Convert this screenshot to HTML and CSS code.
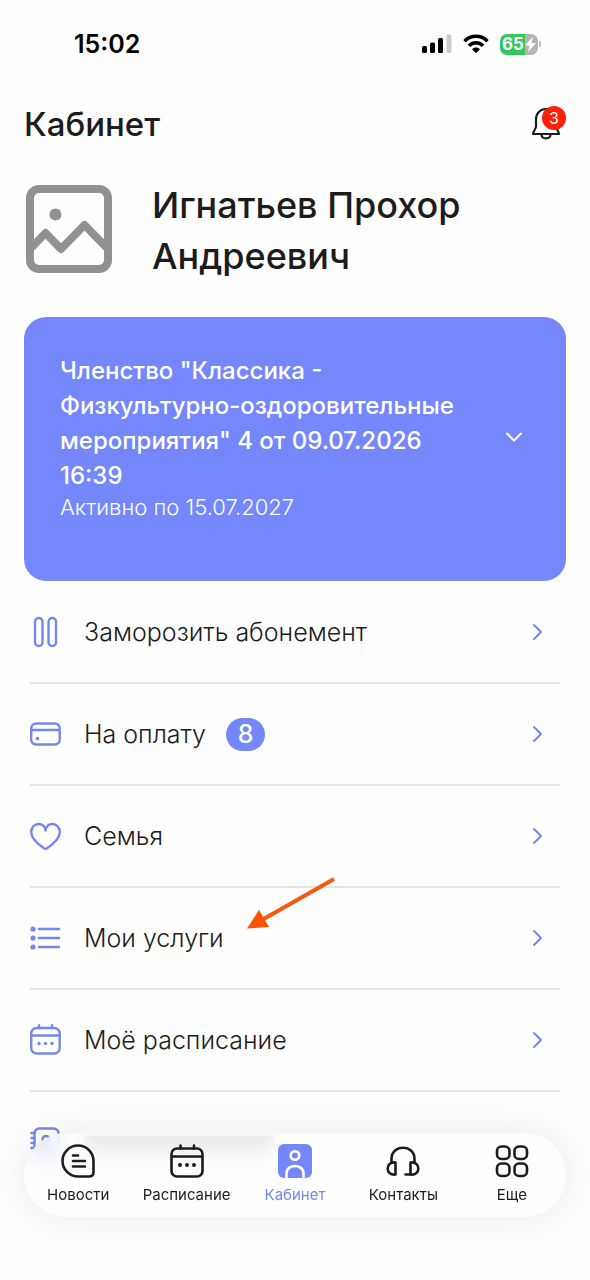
FILE: index.html
```html
<!DOCTYPE html>
<html lang="ru">
<head>
<meta charset="utf-8">
<meta name="viewport" content="width=device-width, initial-scale=1">
<title>Кабинет</title>
<link rel="stylesheet" href="styles.css">
</head>
<body>
<div class="status">
  <time class="clock">15:02</time>
  <div class="status-icons">
    <svg width="30" height="20" viewBox="0 0 30 20"><rect x="0" y="12" width="5" height="7" rx="1.5"/><rect x="8" y="8.500" width="5" height="10.500" rx="1.500"/><rect x="16" y="4" width="5" height="15" rx="1.500"/><rect x="24.500" y="0.500" width="5" height="18.500" rx="1.500" fill="#ccc"/></svg>
    <svg width="26" height="20" viewBox="0 0 26 20" fill="none" stroke="#000" stroke-width="3.400"><path d="M1.500 7.200C8 .6 18 .6 24.500 7.200"/><path d="M6 11.700c4-4 10-4 14 0"/><path d="M13 19.200l-4-4c2.400-2.200 5.600-2.200 8 0z" fill="#000" stroke="none"/></svg>
    <span class="battery">65<svg width="11" height="15" viewBox="0 0 11 15"><path d="M8 0L0 8.500h4.500L3 15l8-9H6.500z" fill="#fff"/></svg></span>
  </div>
</div>
<header class="header">
  <h1 class="title">Кабинет</h1>
  <button class="bell" aria-label="Уведомления">
    <svg width="30" height="34" viewBox="0 0 30 34" fill="none" stroke="#1c1c1c" stroke-width="2.200" stroke-linecap="round" stroke-linejoin="round"><path d="M15 2C9 2 5 6.500 5 12.500v7c0 2.500-3 5-3 7.500h26c0-2.500-3-5-3-7.500v-7C25 6.500 21 2 15 2z"/><path d="M10.500 28c.5 4.500 8.500 4.500 9 0"/></svg>
    <span class="bell-count">3</span>
  </button>
</header>
<main class="main">
  <section class="profile">
    <svg class="avatar" width="90" height="90" viewBox="0 0 90 90" fill="none" stroke="#919191" stroke-width="8" stroke-linejoin="round"><rect x="6" y="5" width="78" height="80" rx="9"/><path d="M7 64L21.500 49 37 65 60.500 41 83 64"/><circle cx="31.500" cy="30.500" r="6" fill="#919191" stroke="none"/></svg>
    <h2 class="name">Игнатьев Прохор Андреевич</h2>
  </section>
  <button class="card">
    <span class="card-body">
      <span class="card-title">Членство "Классика - Физкультурно-оздоровительные мероприятия" 4 от 09.07.2026 16:39</span>
      <span class="card-note">Активно по 15.07.2027</span>
    </span>
    <svg width="18" height="12" viewBox="0 0 18 12" fill="none" stroke="#fff" stroke-width="2" stroke-linecap="round" stroke-linejoin="round"><path d="M2 2.500l7 7 7-7"/></svg>
  </button>
  <nav class="menu">
    <a class="row" href="#">
      <svg class="icon" viewBox="0 0 32 32"><rect x="5" y="2" width="7.500" height="28" rx="3.700"/><rect x="18.500" y="2" width="7.500" height="28" rx="3.700"/></svg>
      <span>Заморозить абонемент</span>
      <svg class="chevron" viewBox="0 0 12 18"><path d="M2 2l7 7-7 7"/></svg>
    </a>
    <a class="row" href="#">
      <svg class="icon" viewBox="0 0 32 32"><rect x="1.200" y="5.500" width="28.500" height="21" rx="5"/><path d="M1.500 12H29.500"/><circle cx="7.500" cy="20.500" r="1.800" class="dot"/></svg>
      <span>На оплату</span><span class="badge">8</span>
      <svg class="chevron" viewBox="0 0 12 18"><path d="M2 2l7 7-7 7"/></svg>
    </a>
    <a class="row" href="#">
      <svg class="icon" viewBox="0 0 32 32"><path d="M15.500 11.500C15.500 1 1.200 1.800 1.200 12.200c0 7 8.800 13.300 12.800 16q1.500 1 3 0c4-2.700 12.800-9 12.800-16C29.800 1.800 15.500 1 15.500 11.500z"/></svg>
      <span>Семья</span>
      <svg class="chevron" viewBox="0 0 12 18"><path d="M2 2l7 7-7 7"/></svg>
    </a>
    <a class="row" href="#">
      <svg class="icon" viewBox="0 0 32 32"><path d="M9 7H29M9 16H29M9 25H29"/><g class="dot"><circle cx="3" cy="7" r="2.600"/><circle cx="3" cy="16" r="2.600"/><circle cx="3" cy="25" r="2.600"/></g></svg>
      <span>Мои услуги</span>
      <svg class="pointer" viewBox="0 0 88 54"><path d="M87 2L14 43.500" stroke="#f4590f" stroke-width="4" fill="none"/><path d="M0 51.500L12 33l10 17z" fill="#fe5200"/></svg>
      <svg class="chevron" viewBox="0 0 12 18"><path d="M2 2l7 7-7 7"/></svg>
    </a>
    <a class="row" href="#">
      <svg class="icon" viewBox="0 0 32 32"><rect x="1.200" y="4" width="28.500" height="25.500" rx="5.500"/><path d="M1.500 11.500H29.500M9 1.200V4M22 1.200V4"/><g class="dot"><circle cx="9" cy="19.500" r="1.700"/><circle cx="15.500" cy="19.500" r="1.700"/><circle cx="22" cy="19.500" r="1.700"/></g></svg>
      <span>Моё расписание</span>
      <svg class="chevron" viewBox="0 0 12 18"><path d="M2 2l7 7-7 7"/></svg>
    </a>
    <div class="row">
      <svg class="icon" viewBox="0 0 32 32"><rect x="4.500" y="1.500" width="24" height="28" rx="5"/><path d="M1.500 6h3M1.500 11h3M1.500 16h3M1.500 21h3"/><circle cx="16" cy="12.500" r="3.500"/><path d="M10 24c1-7 11-7 12 0"/></svg>
      <span class="row-placeholder"></span>
    </div>
  </nav>
</main>
<nav class="tabs">
  <a class="tab" href="#">
    <svg viewBox="0 0 34 34"><path d="M17 1.500C8.500 1.500 1.500 8.500 1.500 17S8.500 32.500 17 32.500H28q4.500 0 4.500-4.500V17C32.500 8.500 25.500 1.500 17 1.500z"/><path d="M12 11.500h5M12 17h12M12 22.500h12"/></svg>
    <span>Новости</span>
  </a>
  <a class="tab" href="#">
    <svg viewBox="0 0 34 34"><rect x="1.500" y="4.500" width="31" height="28" rx="5.500"/><path d="M2 12.500H32M10.500 1.500v3M24 1.500v3"/><g class="dot"><circle cx="10" cy="21" r="2"/><circle cx="17" cy="21" r="2"/><circle cx="24" cy="21" r="2"/></g></svg>
    <span>Расписание</span>
  </a>
  <a class="tab tab-active" href="#" aria-current="page">
    <svg viewBox="0 0 34 34"><rect x="0" y="0" width="34" height="34" rx="6" fill="#7488fb" stroke="none"/><circle cx="17" cy="11.500" r="4.300" stroke="#fff"/><path d="M8.500 33v-3.500c0-10 17-10 17 0V33" stroke="#fff"/></svg>
    <span>Кабинет</span>
  </a>
  <a class="tab" href="#">
    <svg viewBox="0 0 34 34"><path d="M5.500 18v-3C5.500 0 28.500 0 28.500 15v3"/><path d="M9.500 18.500v12C-1 32-1 17 9.500 18.500zM24.500 18.500v12C35 32 35 17 24.500 18.500zM25 30.500h-5.500"/></svg>
    <span>Контакты</span>
  </a>
  <a class="tab" href="#">
    <svg viewBox="0 0 34 34"><rect x="2" y="2.500" width="12.500" height="12.500" rx="4.500"/><rect x="19.500" y="2.500" width="12.500" height="12.500" rx="4.500"/><rect x="2" y="19.500" width="12.500" height="12.500" rx="4.500"/><rect x="19.500" y="19.500" width="12.500" height="12.500" rx="4.500"/></svg>
    <span>Еще</span>
  </a>
</nav>
</body>
</html>
```
FILE: styles.css
```css
* { box-sizing: border-box; }
body {
  margin: 0;
  background: #fefefe;
  color: #1c1c1c;
  font-family: Inter, Roboto, sans-serif;
}
button { border: 0; padding: 0; background: none; font: inherit; color: inherit; text-align: left; }
a { color: inherit; text-decoration: none; }
svg { display: block; flex: none; }
.status {
  display: flex;
  align-items: center;
  justify-content: space-between;
  height: 88px;
  padding: 0 52px 0 74px;
}
.clock { font-size: 25px; font-weight: 600; color: #000; }
.status-icons { display: flex; align-items: center; gap: 11px; }
.battery {
  position: relative;
  display: flex;
  align-items: center;
  justify-content: center;
  gap: 1px;
  width: 38px;
  height: 21px;
  border-radius: 7px;
  background: linear-gradient(90deg, #35c759 65%, #b4b4b4 65%);
  color: #fff;
  font-size: 17px;
  font-weight: 700;
}
.battery::after {
  content: "";
  position: absolute;
  left: 100%;
  width: 2px;
  height: 6px;
  margin-left: 1px;
  border-radius: 0 2px 2px 0;
  background: #b4b4b4;
}
.header {
  display: flex;
  align-items: center;
  justify-content: space-between;
  height: 72px;
  padding: 0 29px 0 24px;
}
.title { margin: 0; font-size: 33px; font-weight: 500; }
.bell { position: relative; }
.bell-count {
  position: absolute;
  top: -1px;
  right: -5px;
  width: 24px;
  height: 24px;
  border-radius: 50%;
  background: #fd1f07;
  color: #fff;
  font-size: 16px;
  line-height: 24px;
  text-align: center;
}
.main { padding: 20px 24px 0; }
.profile { display: flex; align-items: flex-start; gap: 38px; padding-bottom: 35px; }
.avatar { margin-top: 4px; }
.name { margin: 0; font-size: 36px; font-weight: 500; line-height: 51px; }
.card {
  display: flex;
  align-items: center;
  justify-content: space-between;
  width: 100%;
  padding: 36px 43px 60px 36px;
  border-radius: 22px;
  background: #7488fb;
  color: #fff;
}
.card-body { display: flex; flex-direction: column; max-width: 410px; }
.card-title { font-size: 24px; font-weight: 500; line-height: 35px; }
.card-note { font-size: 22px; font-weight: 300; line-height: 28px; }
.menu { padding: 1px 6px 0; }
.row {
  position: relative;
  display: flex;
  align-items: center;
  height: 102px;
  border-bottom: 2px solid #e4e4e4;
  font-size: 25px;
  font-weight: 300;
}
.row:last-child { border-bottom: 0; }
.icon { width: 32px; height: 32px; margin-right: 22px; fill: none; stroke: #7488ea; stroke-width: 2.4; stroke-linecap: round; }
.icon .dot { fill: #7488ea; stroke: none; }
.chevron { width: 12px; height: 18px; margin: 0 16px 0 auto; fill: none; stroke: #7488ea; stroke-width: 2; stroke-linecap: round; stroke-linejoin: round; }
.badge {
  width: 39px;
  height: 33px;
  margin-left: 20px;
  border-radius: 17px;
  background: #7488fb;
  color: #fff;
  font-weight: 500;
  line-height: 33px;
  text-align: center;
}
.pointer { position: absolute; left: 217px; top: -11px; width: 88px; height: 54px; }
.row-placeholder { width: 190px; height: 14px; background: #c4c4c4; }
.tabs {
  position: fixed;
  left: 24px;
  right: 24px;
  bottom: 63px;
  display: grid;
  grid-template-columns: repeat(5, 1fr);
  height: 84px;
  border-radius: 42px;
  background: rgba(254, 254, 254, 0.6);
  backdrop-filter: blur(8px);
  box-shadow: 0 0 36px rgba(0, 0, 0, 0.08);
}
.tab { display: flex; flex-direction: column; align-items: center; gap: 8px; padding-top: 11px; font-size: 15px; line-height: 18px; }
.tab span { white-space: nowrap; }
.tab svg { width: 34px; height: 34px; fill: none; stroke: #1c1c1c; stroke-width: 2.6; stroke-linecap: round; stroke-linejoin: round; }
.tab .dot { fill: #1c1c1c; stroke: none; }
.tab-active { color: #7488ea; }
```
